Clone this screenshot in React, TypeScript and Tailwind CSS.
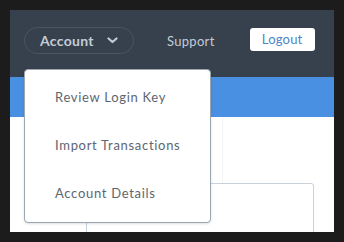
import React from "react";

export default function App() {
  return (
    <div className="w-[344px] h-[242px] bg-[#1c1c1c] p-[10px]" style={{ fontFamily: "Lato, 'Noto Sans', sans-serif" }}>
      <div className="relative w-[324px] h-[222px] overflow-hidden bg-white flex flex-col">
        <div className="h-[67px] shrink-0 bg-[#37404d] flex items-start pt-[17px] pl-[14px]">
          <div className="h-[27px] w-[110px] rounded-full border border-[#4a5462] flex items-center pl-[15px]">
            <span className="text-[14px] font-bold text-[#c3ccd6] tracking-[0.3px]">Account</span>
            <svg className="ml-[13px]" width="11" height="7" viewBox="0 0 11 7">
              <path d="M1.5 1.5 L5.5 5 L9.5 1.5" fill="none" stroke="#c3ccd6" strokeWidth="2.2" strokeLinecap="round" strokeLinejoin="round" />
            </svg>
          </div>
          <span className="ml-[33px] mt-[5px] text-[13px] text-[#c3ccd6] tracking-[0.3px]">Support</span>
          <div className="ml-[35px] mt-[1px] w-[65px] h-[23px] bg-white rounded-[3px] flex items-center justify-center">
            <span className="text-[13px] text-[#4a86c8] tracking-[0.2px]">Logout</span>
          </div>
        </div>
        <div className="h-[40px] shrink-0 bg-[#4a90e2]" />
        <div className="flex-1 min-h-0 relative overflow-hidden">
          <div className="absolute left-[212px] top-0 h-[66px] w-px bg-[#f3f4f6]" />
          <div className="ml-[76px] mt-[66px] w-[228px] h-[80px] border border-[#c9d2db] rounded-[3px]" />
        </div>
        <div className="absolute left-[14px] top-[59px] w-[187px] h-[154px] bg-white border border-[#9aa6b2] rounded-[4px] flex flex-col justify-around pl-[30px] py-[4px] shadow-sm">
          <span className="text-[13px] text-[#5d6670] tracking-[0.7px]">Review Login Key</span>
          <span className="text-[13px] text-[#5d6670] tracking-[0.7px]">Import Transactions</span>
          <span className="text-[13px] text-[#5d6670] tracking-[0.7px]">Account Details</span>
        </div>
      </div>
    </div>
  );
}
